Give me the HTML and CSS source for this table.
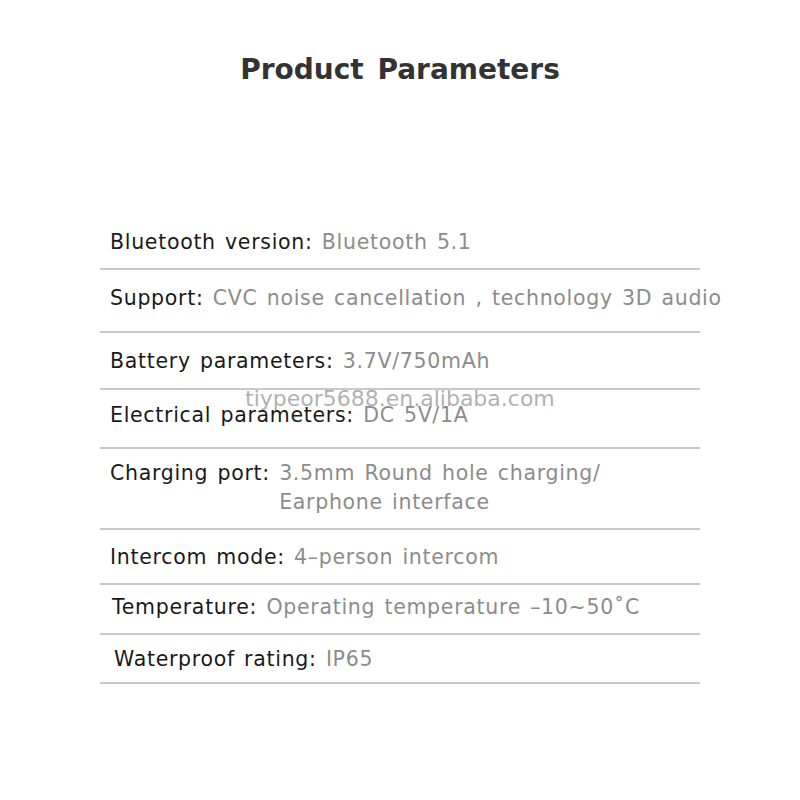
FILE: index.html
```html
<!DOCTYPE html>
<html>
<head>
<meta charset="utf-8">
<link rel="stylesheet" href="styles.css">
</head>
<body>
<div class="page">
  <h1 class="title">Product Parameters</h1>
  <div class="params">
    <div class="row r1"><span class="label">Bluetooth version:</span><span class="value">Bluetooth 5.1</span></div>
    <div class="row r2"><span class="label">Support:</span><span class="value">CVC noise cancellation , technology 3D audio</span></div>
    <div class="row r3"><span class="label">Battery parameters:</span><span class="value">3.7V/750mAh</span></div>
    <div class="row r4"><span class="label">Electrical parameters:</span><span class="value">DC 5V/1A</span></div>
    <div class="row r5"><span class="label">Charging port:</span><span class="value">3.5mm Round hole charging/<br>Earphone interface</span></div>
    <div class="row r6"><span class="label">Intercom mode:</span><span class="value">4–person intercom</span></div>
    <div class="row r7"><span class="label">Temperature:</span><span class="value">Operating temperature –10~50˚C</span></div>
    <div class="row r8"><span class="label">Waterproof rating:</span><span class="value">IP65</span></div>
    <div class="watermark">tiypeor5688.en.alibaba.com</div>
  </div>
</div>
</body>
</html>
```

FILE: styles.css
```css
html, body {
  margin: 0;
  padding: 0;
  background: #ffffff;
}
.page {
  width: 800px;
  height: 800px;
  font-family: "DejaVu Sans", "Liberation Sans", sans-serif;
}
.title {
  margin: 0;
  padding-top: 50px;
  height: 40px;
  line-height: 40px;
  text-align: center;
  font-family: "DejaVu Sans", sans-serif;
  font-weight: bold;
  font-size: 28px;
  color: #333333;
  word-spacing: 4px;
}
.params {
  position: relative;
  margin: 126px 0 0 100px;
  width: 600px;
}
.row {
  display: flex;
  padding-left: 10px;
  font-size: 20.5px;
  line-height: 26px;
  letter-spacing: 0.7px;
  word-spacing: 2px;
  border-bottom: 2px solid #c9c9c9;
}
.label {
  color: #1a1a1a;
  white-space: pre;
}
.label::after {
  content: " ";
}
.value {
  color: #8c8c8c;
  white-space: nowrap;
}
.r1 { padding-top: 13px; padding-bottom: 13px; }
.r2 { padding-top: 15px; padding-bottom: 20px; }
.r3 { padding-top: 15px; padding-bottom: 14px; }
.r4 { padding-top: 12px; padding-bottom: 19px; }
.r5 { padding-top: 10px; padding-bottom: 11px; line-height: 29px; }
.r6 { padding-top: 14px; padding-bottom: 13px; }
.r7 { padding-top: 9px; padding-bottom: 13px; padding-left: 12px; }
.r8 { padding-top: 11px; padding-bottom: 10px; padding-left: 14px; }
.watermark {
  position: absolute;
  left: 145px;
  top: 170px;
  font-size: 22px;
  color: rgba(150, 150, 150, 0.75);
  white-space: nowrap;
}
```
